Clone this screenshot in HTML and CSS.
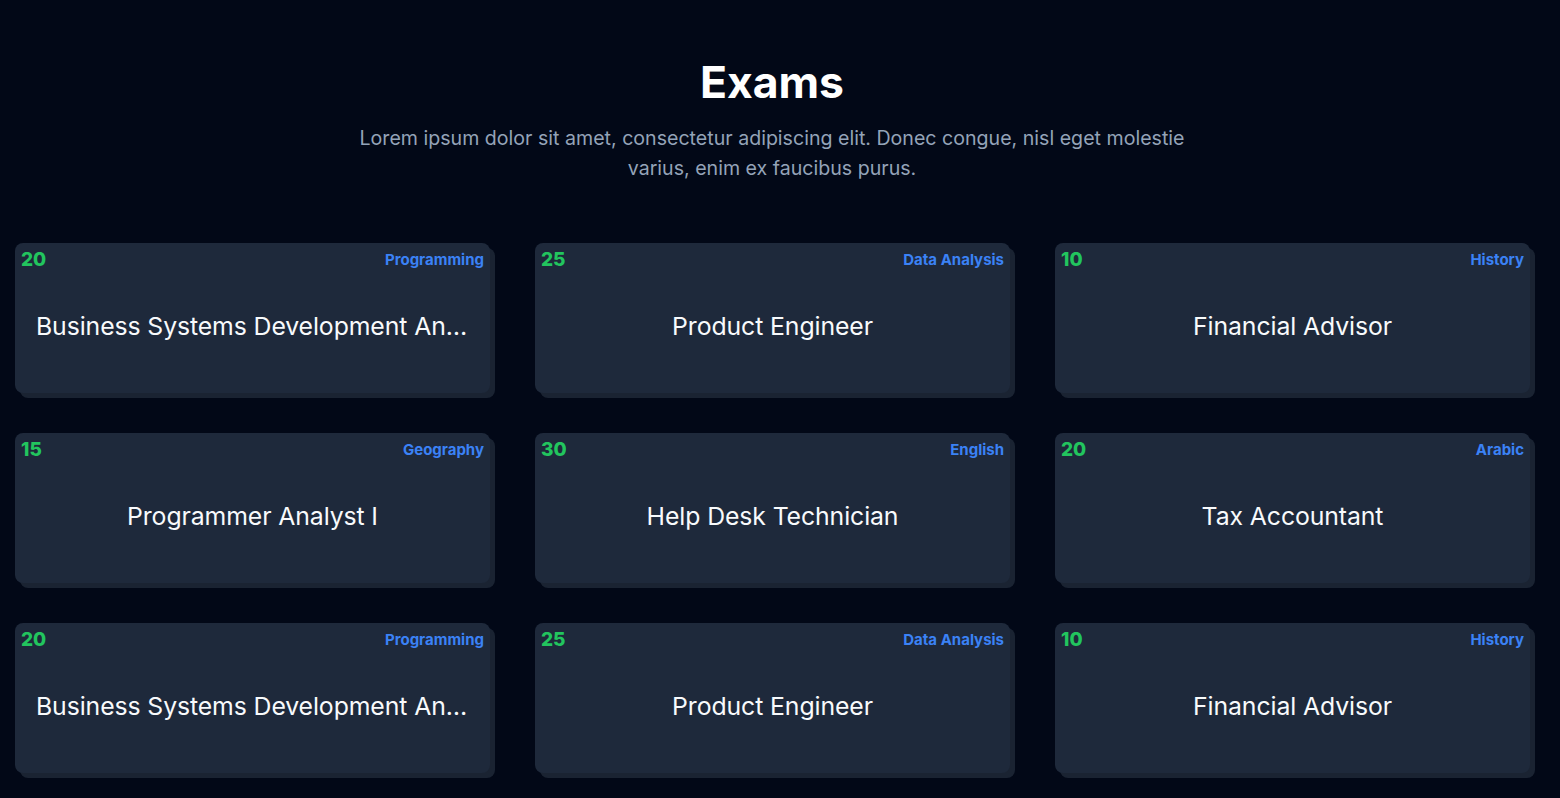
FILE: index.html
```html
<!DOCTYPE html>
<html lang="en">
<head>
<meta charset="utf-8">
<title>Exams</title>
<link rel="stylesheet" href="styles.css">
</head>
<body>
<section class="exams">
  <header class="exams-head">
    <h1 class="exams-title">Exams</h1>
    <p class="exams-sub">Lorem ipsum dolor sit amet, consectetur adipiscing elit. Donec congue, nisl eget molestie varius, enim ex faucibus purus.</p>
  </header>
  <div class="grid">
    <div class="card"><div class="card-top"><span class="num">20</span><span class="cat">Programming</span></div><div class="card-title">Business Systems Development Analyst</div></div>
    <div class="card"><div class="card-top"><span class="num">25</span><span class="cat">Data Analysis</span></div><div class="card-title">Product Engineer</div></div>
    <div class="card"><div class="card-top"><span class="num">10</span><span class="cat">History</span></div><div class="card-title">Financial Advisor</div></div>
    <div class="card"><div class="card-top"><span class="num">15</span><span class="cat">Geography</span></div><div class="card-title">Programmer Analyst I</div></div>
    <div class="card"><div class="card-top"><span class="num">30</span><span class="cat">English</span></div><div class="card-title">Help Desk Technician</div></div>
    <div class="card"><div class="card-top"><span class="num">20</span><span class="cat">Arabic</span></div><div class="card-title">Tax Accountant</div></div>
    <div class="card"><div class="card-top"><span class="num">20</span><span class="cat">Programming</span></div><div class="card-title">Business Systems Development Analyst</div></div>
    <div class="card"><div class="card-top"><span class="num">25</span><span class="cat">Data Analysis</span></div><div class="card-title">Product Engineer</div></div>
    <div class="card"><div class="card-top"><span class="num">10</span><span class="cat">History</span></div><div class="card-title">Financial Advisor</div></div>
  </div>
</section>
</body>
</html>
```
FILE: styles.css
```css
html, body {
  margin: 0;
  padding: 0;
  background: #020817;
}
body {
  font-family: Inter, "Noto Sans", sans-serif;
  color: #f1f5f9;
}
.exams {
  padding: 56px 0 40px;
}
.exams-head {
  width: 1544px;
  text-align: center;
}
.exams-title {
  margin: 0;
  font-size: 44.5px;
  line-height: 52px;
  font-weight: 700;
  color: #ffffff;
}
.exams-sub {
  margin: 15px auto 0;
  max-width: 860px;
  font-size: 19.6px;
  line-height: 30px;
  color: #94a3b8;
}
.grid {
  margin-top: 60px;
  padding-left: 15px;
  display: grid;
  grid-template-columns: repeat(3, 475px);
  column-gap: 45px;
  row-gap: 40px;
}
.card {
  height: 150px;
  background: #1e293b;
  border-radius: 8px;
  box-shadow: 5px 5px 0 #1a2332;
  padding: 5px 6px;
  box-sizing: border-box;
  display: flex;
  flex-direction: column;
}
.card-top {
  display: flex;
  justify-content: space-between;
  align-items: center;
  height: 22px;
}
.num {
  font-size: 19px;
  font-weight: 800;
  color: #22c55e;
}
.cat {
  font-size: 15px;
  font-weight: 700;
  color: #3b82f6;
}
.card-title {
  padding: 0 15px;
  font-size: 24.8px;
  letter-spacing: -0.1px;
  line-height: 114px;
  margin-top: -1px;
  color: #f8fafc;
  min-width: 0;
  white-space: nowrap;
  overflow: hidden;
  text-overflow: ellipsis;
  text-align: center;
}
```
